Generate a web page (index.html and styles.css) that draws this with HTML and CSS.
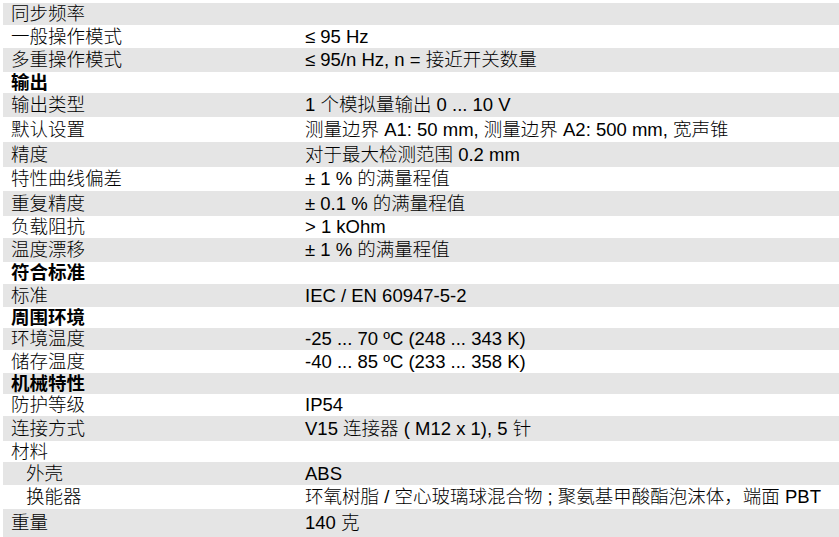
FILE: index.html
```html
<!DOCTYPE html>
<html lang="zh-CN">
<head>
<meta charset="utf-8">
<title>技术数据</title>
<link rel="stylesheet" href="styles.css">
</head>
<body>
<div class="spec">
  <div class="row"><div class="label">同步频率</div><div class="value"></div></div>
  <div class="row"><div class="label">一般操作模式</div><div class="value">≤ 95 Hz</div></div>
  <div class="row"><div class="label">多重操作模式</div><div class="value">≤ 95/n Hz, n = 接近开关数量</div></div>
  <div class="row head"><div class="label">输出</div><div class="value"></div></div>
  <div class="row"><div class="label">输出类型</div><div class="value">1 个模拟量输出 0 ... 10 V</div></div>
  <div class="row"><div class="label">默认设置</div><div class="value">测量边界 A1: 50 mm, 测量边界 A2: 500 mm, 宽声锥</div></div>
  <div class="row"><div class="label">精度</div><div class="value">对于最大检测范围 0.2 mm</div></div>
  <div class="row"><div class="label">特性曲线偏差</div><div class="value">± 1 % 的满量程值</div></div>
  <div class="row"><div class="label">重复精度</div><div class="value">± 0.1 % 的满量程值</div></div>
  <div class="row"><div class="label">负载阻抗</div><div class="value">&gt; 1 kOhm</div></div>
  <div class="row"><div class="label">温度漂移</div><div class="value">± 1 % 的满量程值</div></div>
  <div class="row head"><div class="label">符合标准</div><div class="value"></div></div>
  <div class="row"><div class="label">标准</div><div class="value">IEC / EN 60947-5-2</div></div>
  <div class="row head"><div class="label">周围环境</div><div class="value"></div></div>
  <div class="row"><div class="label">环境温度</div><div class="value">-25 ... 70 ºC (248 ... 343 K)</div></div>
  <div class="row"><div class="label">储存温度</div><div class="value">-40 ... 85 ºC (233 ... 358 K)</div></div>
  <div class="row head"><div class="label">机械特性</div><div class="value"></div></div>
  <div class="row"><div class="label">防护等级</div><div class="value">IP54</div></div>
  <div class="row"><div class="label">连接方式</div><div class="value">V15 连接器 ( M12 x 1), 5 针</div></div>
  <div class="row"><div class="label">材料</div><div class="value"></div></div>
  <div class="row sub"><div class="label">外壳</div><div class="value">ABS</div></div>
  <div class="row sub"><div class="label">换能器</div><div class="value">环氧树脂 / 空心玻璃球混合物 ; 聚氨基甲酸酯泡沫体，端面 PBT</div></div>
  <div class="row"><div class="label">重量</div><div class="value">140 克</div></div>
</div>
</body>
</html>
```

FILE: styles.css
```css
html, body {
  margin: 0;
  padding: 0;
  background: #ffffff;
  overflow: hidden;
}

body {
  font-family: "Liberation Sans", "Noto Sans CJK SC", sans-serif;
  font-size: 18.5px;
  font-weight: 300;
  color: #000000;
}

.spec {
  margin: 3px 0 0 3px;
  display: grid;
  grid-template-rows: 22px 23px 24px 21px 24px 25px 25px 24px 25px 22px 24px 22px 23px 21px 22px 23px 21px 22px 25px 21px 23px 24px 28px;
}

.row {
  display: grid;
  grid-template-columns: 302px 1fr;
  align-items: center;
  line-height: 20px;
  white-space: nowrap;
}

.row:nth-child(odd) {
  background: #e5e5e5;
}

.label {
  padding-left: 8px;
}

.row.sub .label {
  padding-left: 23px;
}

.row.head .label {
  font-weight: 700;
}

.value {
  padding-left: 0;
}
```
